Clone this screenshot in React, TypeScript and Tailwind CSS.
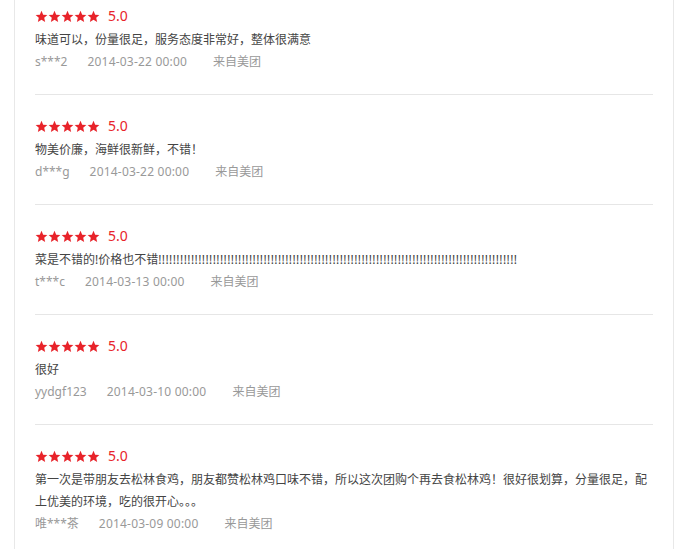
import React from "react";

type Review = {
  user: string;
  date: string;
  text: React.ReactNode;
};

const reviews: Review[] = [
  { user: "s***2", date: "2014-03-22 00:00", text: "味道可以，份量很足，服务态度非常好，整体很满意" },
  { user: "d***g", date: "2014-03-22 00:00", text: "物美价廉，海鲜很新鲜，不错！" },
  {
    user: "t***c",
    date: "2014-03-13 00:00",
    text: (
      <>
        菜是不错的!价格也不错
        <span className="tracking-[0.4px]">{"!".repeat(99)}</span>
      </>
    ),
  },
  { user: "yydgf123", date: "2014-03-10 00:00", text: "很好" },
  {
    user: "唯***茶",
    date: "2014-03-09 00:00",
    text: "第一次是带朋友去松林食鸡，朋友都赞松林鸡口味不错，所以这次团购个再去食松林鸡！很好很划算，分量很足，配上优美的环境，吃的很开心。。。",
  },
];

const Star = () => (
  <svg width="13" height="13" viewBox="0 0 24 24" className="block">
    <path
      d="M12 1.5l3.1 7.1 7.7.7-5.8 5.1 1.7 7.6L12 18l-6.7 4 1.7-7.6-5.8-5.1 7.7-.7z"
      fill="#e8232a"
    />
  </svg>
);

const App: React.FC = () => {
  return (
    <div className="w-[688px] h-[549px] overflow-hidden bg-white font-['Noto_Sans','Noto_Sans_CJK_SC',sans-serif]">
      <div className="ml-[14px] w-[660px] min-h-[549px] border-x border-[#e8e8e8] px-5">
        {reviews.map((r, i) => (
          <div
            key={i}
            className={`border-b border-[#e6e6e6] pb-[21px] ${i === 0 ? "pt-[6px]" : "pt-[21px]"} ${
              i === reviews.length - 1 ? "border-b-0" : ""
            }`}
          >
            <div className="flex items-center h-5">
              <div className="flex">
                <Star />
                <Star />
                <Star />
                <Star />
                <Star />
              </div>
              <span className="ml-[8px] text-[14px] leading-5 text-[#e8232a]">5.0</span>
            </div>
            <p className="mt-[3px] pr-1 text-[12px] leading-[22px] text-[#444] break-all">
              {r.text}
            </p>
            <div className="flex h-[22px] items-center text-[12px] text-[#999]">
              <span className="mr-[20px]">{r.user}</span>
              <span className="mr-[26px] tracking-[0.2px]">{r.date}</span>
              <span>来自美团</span>
            </div>
          </div>
        ))}
      </div>
    </div>
  );
};

export default App;
